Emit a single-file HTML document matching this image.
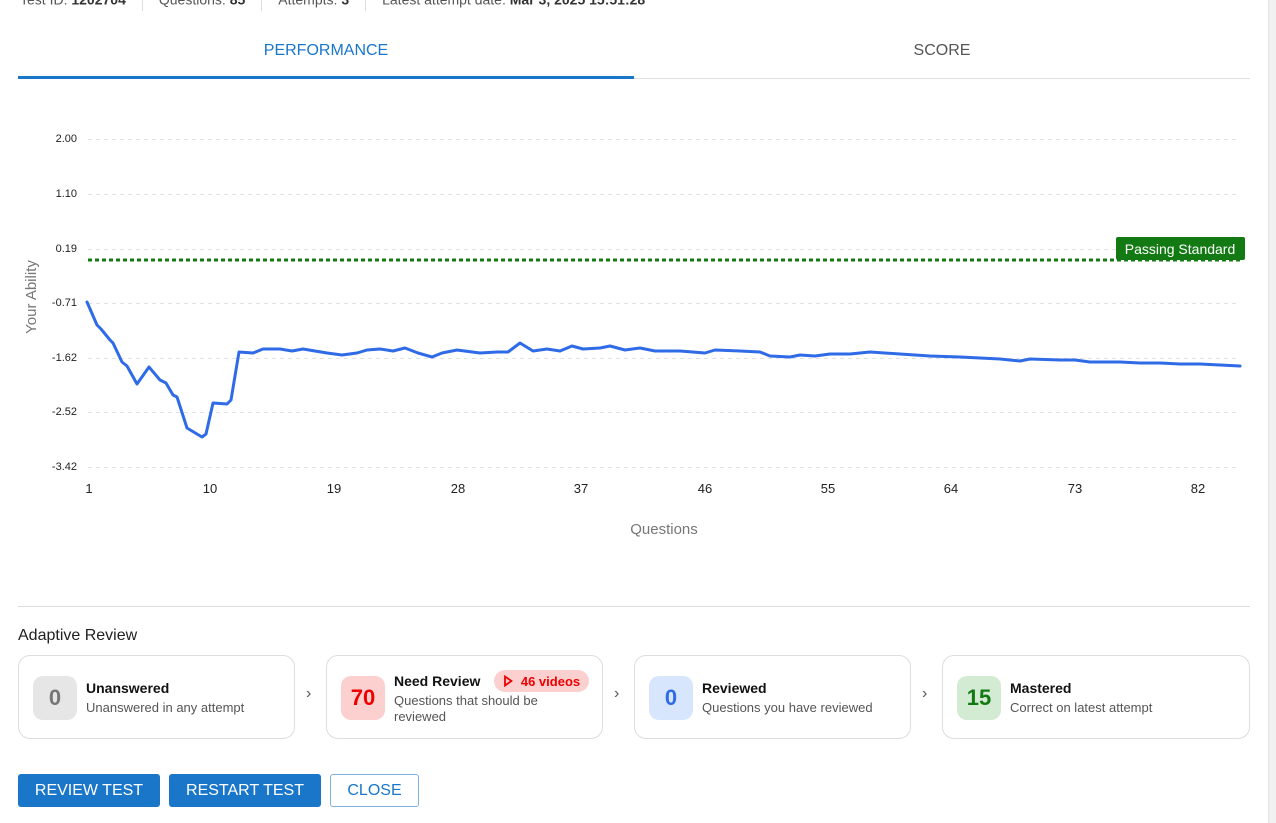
<!DOCTYPE html>
<html><head><meta charset="utf-8"><style>
*{margin:0;padding:0;box-sizing:border-box}
body{width:1276px;height:823px;overflow:hidden;background:#fff;font-family:"Liberation Sans",Arial,sans-serif;position:relative;color:#222}
.a{position:absolute}
.strip{left:1268px;top:0;width:8px;height:823px;background:#f1f1f1;border-left:1px solid #e4e4e4}
.top{top:-9px;left:20px;font-size:14px;color:#555;white-space:nowrap}
.top b{color:#333}
.top .sep{display:inline-block;width:1px;height:20px;background:#ddd;vertical-align:middle;margin:0 16px}
.tab{top:42px;font-size:16px;text-align:center;width:616px}
.yl{font-size:11px;color:#222;right:1199px;text-align:right}
.xl{font-size:13px;color:#222;top:481px;width:40px;text-align:center;margin-left:-20px}
.card{top:655px;height:84px;border:1px solid #ddd;border-radius:12px;background:#fff}
.num{top:20px;left:14px;width:44px;height:44px;border-radius:10px;font-size:22px;font-weight:bold;display:flex;align-items:center;justify-content:center}
.ct{left:67px;top:24px;font-size:14px;font-weight:bold;color:#111}
.cs{left:67px;top:44px;font-size:13px;color:#555;line-height:16px}
.chev{font-size:16px;color:#555;top:685px}
.btn{top:774px;height:33px;border-radius:3px;font-size:16px;display:flex;align-items:center;justify-content:center}
</style></head><body>
<div class="a strip"></div>
<div class="a top">Test ID: <b>1202704</b><span class="sep"></span>Questions: <b>85</b><span class="sep"></span>Attempts: <b>3</b><span class="sep"></span>Latest attempt date: <b>Mar 3, 2025 15:51:28</b></div>
<div class="a tab" style="left:18px;color:#1a76c9">PERFORMANCE</div>
<div class="a tab" style="left:634px;color:#555">SCORE</div>
<div class="a" style="left:18px;top:78px;width:1232px;height:1px;background:#e0e0e0"></div>
<div class="a" style="left:18px;top:76px;width:616px;height:3px;background:#1a76c9"></div>

<svg class="a" style="left:0;top:0" width="1276" height="560">
<g stroke="#e2e2e2" stroke-dasharray="4 4" stroke-width="1">
<line x1="88" y1="139.5" x2="1240" y2="139.5"/><line x1="88" y1="194.5" x2="1240" y2="194.5"/><line x1="88" y1="249.5" x2="1240" y2="249.5"/><line x1="88" y1="303.5" x2="1240" y2="303.5"/><line x1="88" y1="358.5" x2="1240" y2="358.5"/><line x1="88" y1="412.5" x2="1240" y2="412.5"/><line x1="88" y1="467.5" x2="1240" y2="467.5"/>
</g>
<line x1="88" y1="260" x2="1240" y2="260" stroke="#137a13" stroke-width="3" stroke-dasharray="4 3"/>
<polyline fill="none" stroke="#2f6be6" stroke-width="3" stroke-linejoin="round" stroke-linecap="round" points="87,302 97,325 101,329 110,340 113,343 122,362 127,366 137,384 149,367 160,380 166,383 173,395 177,397 187,428 192,431 202,437 206,434 213,403 227,404 231,400 239,352 253,353 263,349 280,349 292,351 303,349 327,353 342,355 357,353 367,350 380,349 393,351 405,348 418,353 432,357 442,353 457,350 480,353 497,352 508,352 520,343 533,351 547,349 560,351 572,346 583,349 600,348 610,346 625,350 640,348 655,351 680,351 705,353 715,350 740,351 760,352 770,356 790,357 800,355 815,356 830,354 850,354 870,352 900,354 930,356 960,357 1000,359 1020,361 1030,359 1060,360 1075,360 1090,362 1120,362 1140,363 1160,363 1180,364 1200,364 1240,366"/>
<rect x="1116" y="237" width="129" height="23" rx="2" fill="#137a13"/>
<text x="1180" y="254" fill="#fff" font-size="14" text-anchor="middle" font-family="Liberation Sans,Arial,sans-serif">Passing Standard</text>
<text x="36" y="297" fill="#777" font-size="15" text-anchor="middle" transform="rotate(-90 36 297)" font-family="Liberation Sans,Arial,sans-serif">Your Ability</text>
<text x="664" y="534" fill="#777" font-size="15" text-anchor="middle" font-family="Liberation Sans,Arial,sans-serif">Questions</text>
</svg>
<div class="a yl" style="top:133px">2.00</div>
<div class="a yl" style="top:188px">1.10</div>
<div class="a yl" style="top:243px">0.19</div>
<div class="a yl" style="top:297px">-0.71</div>
<div class="a yl" style="top:352px">-1.62</div>
<div class="a yl" style="top:406px">-2.52</div>
<div class="a yl" style="top:461px">-3.42</div>
<div class="a xl" style="left:89px">1</div><div class="a xl" style="left:210px">10</div><div class="a xl" style="left:334px">19</div><div class="a xl" style="left:458px">28</div><div class="a xl" style="left:581px">37</div><div class="a xl" style="left:705px">46</div><div class="a xl" style="left:828px">55</div><div class="a xl" style="left:951px">64</div><div class="a xl" style="left:1075px">73</div><div class="a xl" style="left:1198px">82</div>

<div class="a" style="left:18px;top:606px;width:1232px;height:1px;background:#ddd"></div>
<div class="a" style="left:18px;top:627px;font-size:16px;color:#222">Adaptive Review</div>

<div class="a card" style="left:18px;width:277px"><div class="a num" style="background:#e6e6e6;color:#777">0</div><div class="a ct">Unanswered</div><div class="a cs">Unanswered in any attempt</div></div>
<div class="a chev" style="left:306px">›</div>
<div class="a card" style="left:326px;width:277px"><div class="a num" style="background:#fdd0d0;color:#e00">70</div><div class="a ct" style="top:17px">Need Review</div>
<div class="a" style="left:167px;top:14px;width:95px;height:22px;border-radius:11px;background:#fdd0d0;color:#e00;font-size:13px;font-weight:bold;display:flex;align-items:center;justify-content:center"><svg width="10" height="12" style="margin-right:8px"><path d="M2 1.5 L8.5 6 L2 10.5 Z" fill="none" stroke="#e00" stroke-width="1.8"/></svg>46 videos</div>
<div class="a cs" style="top:37px;width:180px">Questions that should be reviewed</div></div>
<div class="a chev" style="left:614px">›</div>
<div class="a card" style="left:634px;width:277px"><div class="a num" style="background:#d8e6fd;color:#2f6be6">0</div><div class="a ct">Reviewed</div><div class="a cs">Questions you have reviewed</div></div>
<div class="a chev" style="left:922px">›</div>
<div class="a card" style="left:942px;width:308px"><div class="a num" style="background:#d3ead3;color:#137a13">15</div><div class="a ct">Mastered</div><div class="a cs">Correct on latest attempt</div></div>

<div class="a btn" style="left:18px;width:142px;background:#1a76c9;color:#fff">REVIEW TEST</div>
<div class="a btn" style="left:169px;width:152px;background:#1a76c9;color:#fff">RESTART TEST</div>
<div class="a btn" style="left:330px;width:89px;border:1px solid #7fb0e0;color:#1a76c9;background:#fff">CLOSE</div>
</body></html>
